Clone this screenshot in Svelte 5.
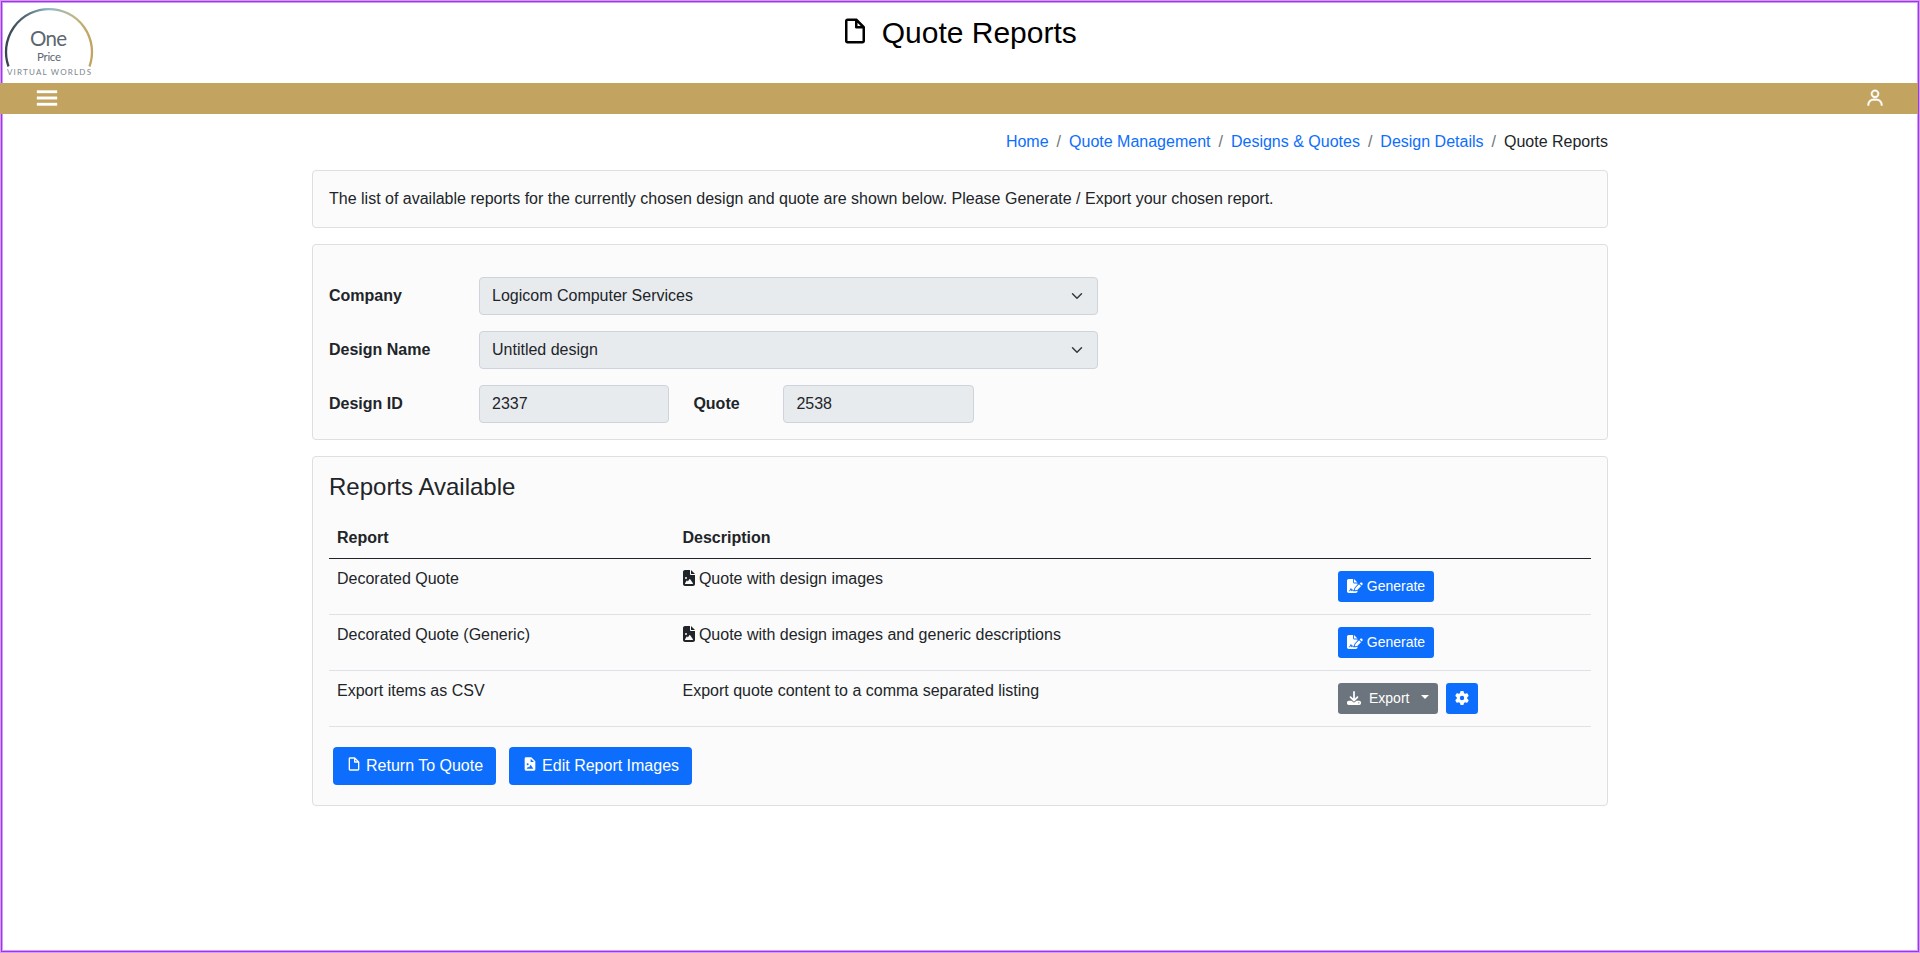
<script>
  const crumbs = ['Home', 'Quote Management', 'Designs & Quotes', 'Design Details'];

  const reports = [
    { name: 'Decorated Quote', description: 'Quote with design images', images: true, action: 'generate' },
    { name: 'Decorated Quote (Generic)', description: 'Quote with design images and generic descriptions', images: true, action: 'generate' },
    { name: 'Export items as CSV', description: 'Export quote content to a comma separated listing', images: false, action: 'export' }
  ];

  const icons = {
    file: {
      box: '0 0 24 24',
      d: 'M19.937 8.68c-.011-.032-.02-.063-.033-.094a.997.997 0 0 0-.196-.293l-6-6a.997.997 0 0 0-.293-.196c-.03-.014-.062-.022-.094-.033a.991.991 0 0 0-.259-.051C13.04 2.011 13.021 2 13 2H6c-1.103 0-2 .897-2 2v16c0 1.103.897 2 2 2h12c1.103 0 2-.897 2-2V9c0-.021-.011-.04-.013-.062a.99.99 0 0 0-.05-.258zM16.586 8H14V5.414L16.586 8zM6 20V4h6v5a1 1 0 0 0 1 1h5l.002 10H6z'
    },
    picture: {
      box: '0 0 24 24',
      d: 'M6 22h12a2 2 0 0 0 2-2V8l-6-6H6a2 2 0 0 0-2 2v16a2 2 0 0 0 2 2zm7-18 5 5h-5V4zm-4.5 7a1.5 1.5 0 1 1-.001 3.001A1.5 1.5 0 0 1 8.5 11zm.5 5 1.597 1.363L13 13l4 6H7l2-3z'
    },
    menu: { box: '0 0 24 24', d: 'M4 6h16v2H4zm0 5h16v2H4zm0 5h16v2H4z' },
    user: {
      box: '0 0 24 24',
      d: 'M12 2a5 5 0 1 0 5 5 5 5 0 0 0-5-5zm0 8a3 3 0 1 1 3-3 3 3 0 0 1-3 3zm9 11v-1a7 7 0 0 0-7-7h-4a7 7 0 0 0-7 7v1h2v-1a5 5 0 0 1 5-5h4a5 5 0 0 1 5 5v1z'
    },
    fileImage: {
      box: '0 0 384 512',
      d: 'M64 0C28.7 0 0 28.7 0 64V448c0 35.3 28.7 64 64 64H320c35.3 0 64-28.7 64-64V160H256c-17.7 0-32-14.3-32-32V0H64zM256 0V128H384L256 0zM64 256a32 32 0 1 1 64 0 32 32 0 1 1 -64 0zm152 32c5.3 0 10.2 2.6 13.2 6.9l88 128c3.4 4.9 3.7 11.3 1 16.5s-8.2 8.6-14.2 8.6H216 176 128 80c-5.8 0-11.1-3.1-13.9-8.1s-2.8-11.2 .2-16.1l48-80c2.9-4.8 8.1-7.8 13.7-7.8s10.8 2.9 13.7 7.8l12.8 21.4 48.3-70.2c3-4.3 7.9-6.9 13.2-6.9z'
    },
    signature: {
      box: '0 0 576 512',
      d: 'M64 0C28.7 0 0 28.7 0 64V448c0 35.3 28.7 64 64 64H320c35.3 0 64-28.7 64-64V428.7c-2.7 1.1-5.4 2-8.2 2.7l-60.1 15c-3 .7-6 1.2-9 1.4c-.9 .1-1.8 .2-2.7 .2H240c-6.1 0-11.6-3.4-14.3-8.8l-8.8-17.7c-1.7-3.4-5.1-5.5-8.8-5.5s-7.2 2.1-8.8 5.5l-8.8 17.7c-2.9 5.9-9.2 9.4-15.7 8.8s-12.1-5.1-13.9-11.3L144 381l-9.8 32.8c-6.1 20.3-24.8 34.2-46 34.2H80c-8.8 0-16-7.2-16-16s7.2-16 16-16h8.2c7.1 0 13.3-4.6 15.3-11.4l14.9-49.5c3.4-11.3 13.8-19.1 25.6-19.1s22.2 7.7 25.6 19.1l11.6 38.6c7.4-6.2 16.8-9.7 26.8-9.7c15.9 0 30.4 9 37.5 23.2l4.4 8.8h8.9c-3.1-8.8-3.7-18.4-1.4-27.8l15-60.1c2.8-11.3 8.6-21.5 16.8-29.7L384 203.6V160H256c-17.7 0-32-14.3-32-32V0H64zM256 0V128H384L256 0zM549.8 139.7c-15.6-15.6-40.9-15.6-56.6 0l-29.4 29.4 71 71 29.4-29.4c15.6-15.6 15.6-40.9 0-56.6l-14.4-14.4zM311.9 321c-4.1 4.1-7 9.2-8.4 14.9l-15 60.1c-1.4 5.5 .2 11.2 4.2 15.2s9.7 5.6 15.2 4.2l60.1-15c5.6-1.4 10.8-4.3 14.9-8.4L512.1 262.7l-71-71L311.9 321z'
    },
    download: {
      box: '0 0 512 512',
      d: 'M288 32c0-17.7-14.3-32-32-32s-32 14.3-32 32V274.7l-73.4-73.4c-12.5-12.5-32.8-12.5-45.3 0s-12.5 32.8 0 45.3l128 128c12.5 12.5 32.8 12.5 45.3 0l128-128c12.5-12.5 12.5-32.8 0-45.3s-32.8-12.5-45.3 0L288 274.7V32zM64 352c-35.3 0-64 28.7-64 64v32c0 35.3 28.7 64 64 64H448c35.3 0 64-28.7 64-64V416c0-35.3-28.7-64-64-64H346.5l-45.3 45.3c-25 25-65.5 25-90.5 0L165.5 352H64zm368 56a24 24 0 1 1 0 48 24 24 0 1 1 0-48z'
    },
    gear: {
      box: '0 0 512 512',
      d: 'M495.9 166.6c3.2 8.7 .5 18.4-6.4 24.6l-43.3 39.4c1.1 8.3 1.7 16.8 1.7 25.4s-.6 17.1-1.7 25.4l43.3 39.4c6.9 6.2 9.6 15.9 6.4 24.6c-4.4 11.9-9.7 23.3-15.8 34.3l-4.7 8.1c-6.6 11-14 21.4-22.1 31.2c-5.9 7.2-15.7 9.6-24.5 6.8l-55.7-17.7c-13.4 10.3-28.2 18.9-44 25.4l-12.5 57.1c-2 9.1-9 16.3-18.2 17.8c-13.8 2.3-28 3.5-42.5 3.5s-28.7-1.2-42.5-3.5c-9.2-1.5-16.2-8.7-18.2-17.8l-12.5-57.1c-15.8-6.5-30.6-15.1-44-25.4L83.1 425.9c-8.8 2.8-18.6 .3-24.5-6.8c-8.1-9.8-15.5-20.2-22.1-31.2l-4.7-8.1c-6.1-11-11.4-22.4-15.8-34.3c-3.2-8.7-.5-18.4 6.4-24.6l43.3-39.4C64.6 273.1 64 264.6 64 256s.6-17.1 1.7-25.4L22.4 191.2c-6.9-6.2-9.6-15.9-6.4-24.6c4.4-11.9 9.7-23.3 15.8-34.3l4.7-8.1c6.6-11 14-21.4 22.1-31.2c5.9-7.2 15.7-9.6 24.5-6.8l55.7 17.7c13.4-10.3 28.2-18.9 44-25.4l12.5-57.1c2-9.1 9-16.3 18.2-17.8C227.3 1.2 241.5 0 256 0s28.7 1.2 42.5 3.5c9.2 1.5 16.2 8.7 18.2 17.8l12.5 57.1c15.8 6.5 30.6 15.1 44 25.4l55.7-17.7c8.8-2.8 18.6-.3 24.5 6.8c8.1 9.8 15.5 20.2 22.1 31.2l4.7 8.1c6.1 11 11.4 22.4 15.8 34.3zM256 336a80 80 0 1 0 0-160 80 80 0 1 0 0 160z'
    }
  };
</script>

{#snippet icon(name, cls)}
<svg class="icon {cls}" viewBox={icons[name].box} aria-hidden="true"><path d={icons[name].d} /></svg>
{/snippet}

{#snippet select(id, value)}
<div class="control select" {id} role="combobox" aria-disabled="true" aria-expanded="false" aria-controls={id}>
  <span>{value}</span>
  <svg class="chevron" viewBox="0 0 16 16" aria-hidden="true"><path d="m2 5 6 6 6-6" /></svg>
</div>
{/snippet}

<div class="page">
  <header>
    <svg class="logo" viewBox="0 0 96 80" role="img" aria-label="One Price Virtual Worlds">
      <defs>
        <linearGradient id="ring" x1="0" y1="0" x2="1" y2="0">
          <stop offset="0" stop-color="#38444f" />
          <stop offset="0.22" stop-color="#536775" />
          <stop offset="0.5" stop-color="#8fb8c6" />
          <stop offset="0.78" stop-color="#bdb78b" />
          <stop offset="1" stop-color="#c2a35f" />
        </linearGradient>
      </defs>
      <path class="ring" d="M8.500 66.500A43 43 0 1 1 89.500 66.500" />
      <text class="one" x="30" y="46" textLength="37">One</text>
      <text class="price" x="37" y="61" textLength="24">Price</text>
      <text class="worlds" x="7" y="75" textLength="84">VIRTUAL WORLDS</text>
    </svg>
    <h1>{@render icon('file', 'title-icon')}Quote Reports</h1>
  </header>

  <nav class="bar">
    <button aria-label="Menu">{@render icon('menu', 'menu-icon')}</button>
    <button aria-label="Account">{@render icon('user', 'user-icon')}</button>
  </nav>

  <main>
    <ol class="breadcrumb">
      {#each crumbs as crumb}
      <li><a href="#top">{crumb}</a></li>
      {/each}
      <li>Quote Reports</li>
    </ol>

    <section class="card">
      The list of available reports for the currently chosen design and quote are shown below. Please Generate / Export your chosen report.
    </section>

    <section class="card details">
      <div class="field">
        <span class="label">Company</span>
        {@render select('company', 'Logicom Computer Services')}
      </div>
      <div class="field">
        <span class="label">Design Name</span>
        {@render select('design', 'Untitled design')}
      </div>
      <div class="field">
        <span class="label">Design ID</span>
        <div class="control short">2337</div>
        <span class="label quote-label">Quote</span>
        <div class="control short">2538</div>
      </div>
    </section>

    <section class="card reports">
      <h2>Reports Available</h2>
      <table>
        <thead>
          <tr>
            <th class="col-report">Report</th>
            <th class="col-description">Description</th>
            <th></th>
          </tr>
        </thead>
        <tbody>
          {#each reports as report (report.name)}
          <tr>
            <td>{report.name}</td>
            <td>{#if report.images}{@render icon('fileImage', 'row-icon')}{/if}{report.description}</td>
            <td>
              <div class="actions">
                {#if report.action === 'generate'}
                <button class="btn small">{@render icon('signature', 'signature-icon')}Generate</button>
                {:else}
                <button class="btn small grey">{@render icon('download', 'download-icon')}Export<span class="caret"></span></button>
                <button class="btn small gear" aria-label="Settings">{@render icon('gear', 'gear-icon')}</button>
                {/if}
              </div>
            </td>
          </tr>
          {/each}
        </tbody>
      </table>
      <div class="footer-actions">
        <button class="btn">{@render icon('file', 'btn-icon')}Return To Quote</button>
        <button class="btn">{@render icon('picture', 'btn-icon')}Edit Report Images</button>
      </div>
    </section>
  </main>
  <div class="frame"></div>
</div>

<style>
  :global(body) {
    margin: 0;
    background: #fff;
  }

  .page {
    position: relative;
    box-sizing: border-box;
    height: 953px;
    overflow: hidden;
    font-family: "Liberation Sans", Arial, sans-serif;
    font-size: 16px;
    line-height: 24px;
    color: #212529;
  }

  .page *,
  .page :global(*) {
    box-sizing: border-box;
  }

  /* highlight drawn around the whole window */
  .frame {
    position: absolute;
    inset: 0;
    border: 1px solid #d59bfb;
    outline: 1px solid #9c36e8;
    outline-offset: -2px;
    box-shadow: inset 0 0 0 2px #d59bfb;
    pointer-events: none;
  }

  header {
    display: grid;
    grid-template-columns: 96px 1fr 96px;
    height: 83px;
  }

  .logo {
    width: 96px;
    height: 80px;
    font-family: Lato, sans-serif;
    fill: #5d666f;
  }

  .ring {
    fill: none;
    stroke: url(#ring);
    stroke-width: 2.3;
  }

  .one {
    font-size: 20.5px;
  }

  .price {
    font-size: 11.5px;
  }

  .worlds {
    font-size: 8px;
    fill: #7d858c;
  }

  h1 {
    display: flex;
    justify-content: center;
    align-items: flex-start;
    margin: 0;
    padding: 15px 3px 0 0;
    font-size: 30px;
    line-height: 36px;
    font-weight: 400;
    color: #000;
  }

  .icon {
    flex: none;
    fill: currentColor;
  }

  .title-icon {
    width: 30px;
    height: 30px;
    margin: 1px 11.5px 0 0;
  }

  /* sits above the left edge of the frame */
  .bar {
    position: relative;
    z-index: 1;
    display: flex;
    justify-content: space-between;
    align-items: flex-start;
    height: 31px;
    margin-right: 2px;
    padding: 0 33px 0 32px;
    background: #c2a35f;
    color: #fff;
  }

  .bar button {
    display: flex;
    padding: 0;
    border: 0;
    background: none;
    color: inherit;
  }

  .menu-icon {
    width: 30px;
    height: 30px;
    stroke: currentColor;
    stroke-width: 0.3;
  }

  .user-icon {
    width: 20px;
    height: 20px;
    margin-top: 5px;
    stroke: currentColor;
    stroke-width: 0.4;
  }

  main {
    width: 1296px;
    margin: 0 auto;
    padding-top: 16px;
  }

  .breadcrumb {
    display: flex;
    justify-content: flex-end;
    margin: 0 0 16px;
    padding: 0;
    list-style: none;
  }

  .breadcrumb li + li::before {
    content: "/";
    padding: 0 8px;
    color: #6c757d;
  }

  .breadcrumb a {
    color: #0d6efd;
    text-decoration: none;
  }

  .card {
    margin-bottom: 16px;
    padding: 16px;
    border: 1px solid #dfdfdf;
    border-radius: 4px;
    background: #fbfbfb;
  }

  .details {
    display: grid;
    gap: 16px;
    padding-top: 32px;
  }

  .field {
    display: flex;
    align-items: center;
    height: 38px;
  }

  .label {
    width: 150px;
    font-weight: 700;
  }

  .quote-label {
    width: 90px;
    margin-left: 24px;
  }

  .control {
    height: 38px;
    padding: 6px 12px;
    border: 1px solid #ced4da;
    border-radius: 4px;
    background: #e8ebee;
  }

  .select {
    display: flex;
    justify-content: space-between;
    align-items: flex-start;
    width: 619px;
  }

  .chevron {
    width: 16px;
    height: 12px;
    margin-top: 6px;
    fill: none;
    stroke: #343a40;
    stroke-width: 2;
    stroke-linecap: round;
    stroke-linejoin: round;
  }

  .short {
    width: 190.4px;
  }

  .reports {
    margin-bottom: 0;
  }

  h2 {
    height: 29px;
    margin: 0 0 15px;
    font-size: 24px;
    line-height: 27px;
    font-weight: 400;
  }

  table {
    width: 100%;
    table-layout: fixed;
    border-collapse: separate;
    border-spacing: 0;
  }

  th,
  td {
    height: 56px;
    padding: 8px;
    border-bottom: 1px solid #dee2e6;
    text-align: left;
    vertical-align: top;
  }

  th {
    height: 42px;
    padding-top: 9px;
    border-bottom-color: #212529;
  }

  .col-report {
    width: 345.5px;
  }

  .col-description {
    width: 651.5px;
  }

  .row-icon {
    width: 12px;
    height: 16px;
    margin-right: 4.4px;
    vertical-align: -2px;
  }

  .actions {
    display: flex;
    gap: 8px;
    margin: 4px;
  }

  .btn {
    display: inline-flex;
    align-items: center;
    height: 38px;
    padding: 0 13px;
    border: 0;
    border-radius: 4px;
    background: #0d6efd;
    color: #fff;
    font: inherit;
    white-space: nowrap;
  }

  .small {
    height: 31px;
    padding: 0 9px 2px;
    border-radius: 3.2px;
    font-size: 14px;
  }

  .grey {
    background: #6c757d;
  }

  .gear {
    width: 32px;
  }

  .signature-icon {
    width: 15.75px;
    height: 14px;
    margin-right: 4px;
  }

  .download-icon {
    width: 14px;
    height: 14px;
    margin-right: 8px;
  }

  .gear-icon {
    width: 14px;
    height: 14px;
    margin-left: 0.5px;
  }

  .caret {
    margin: -1px 0 0 11.5px;
    border-top: 4.2px solid;
    border-left: 4.2px solid transparent;
    border-right: 4.2px solid transparent;
  }

  .btn-icon {
    width: 16px;
    height: 16px;
    margin: -4px 4px 0 0;
  }

  .footer-actions {
    display: flex;
    gap: 13px;
    margin: 20px 4px 4px;
  }
</style>
